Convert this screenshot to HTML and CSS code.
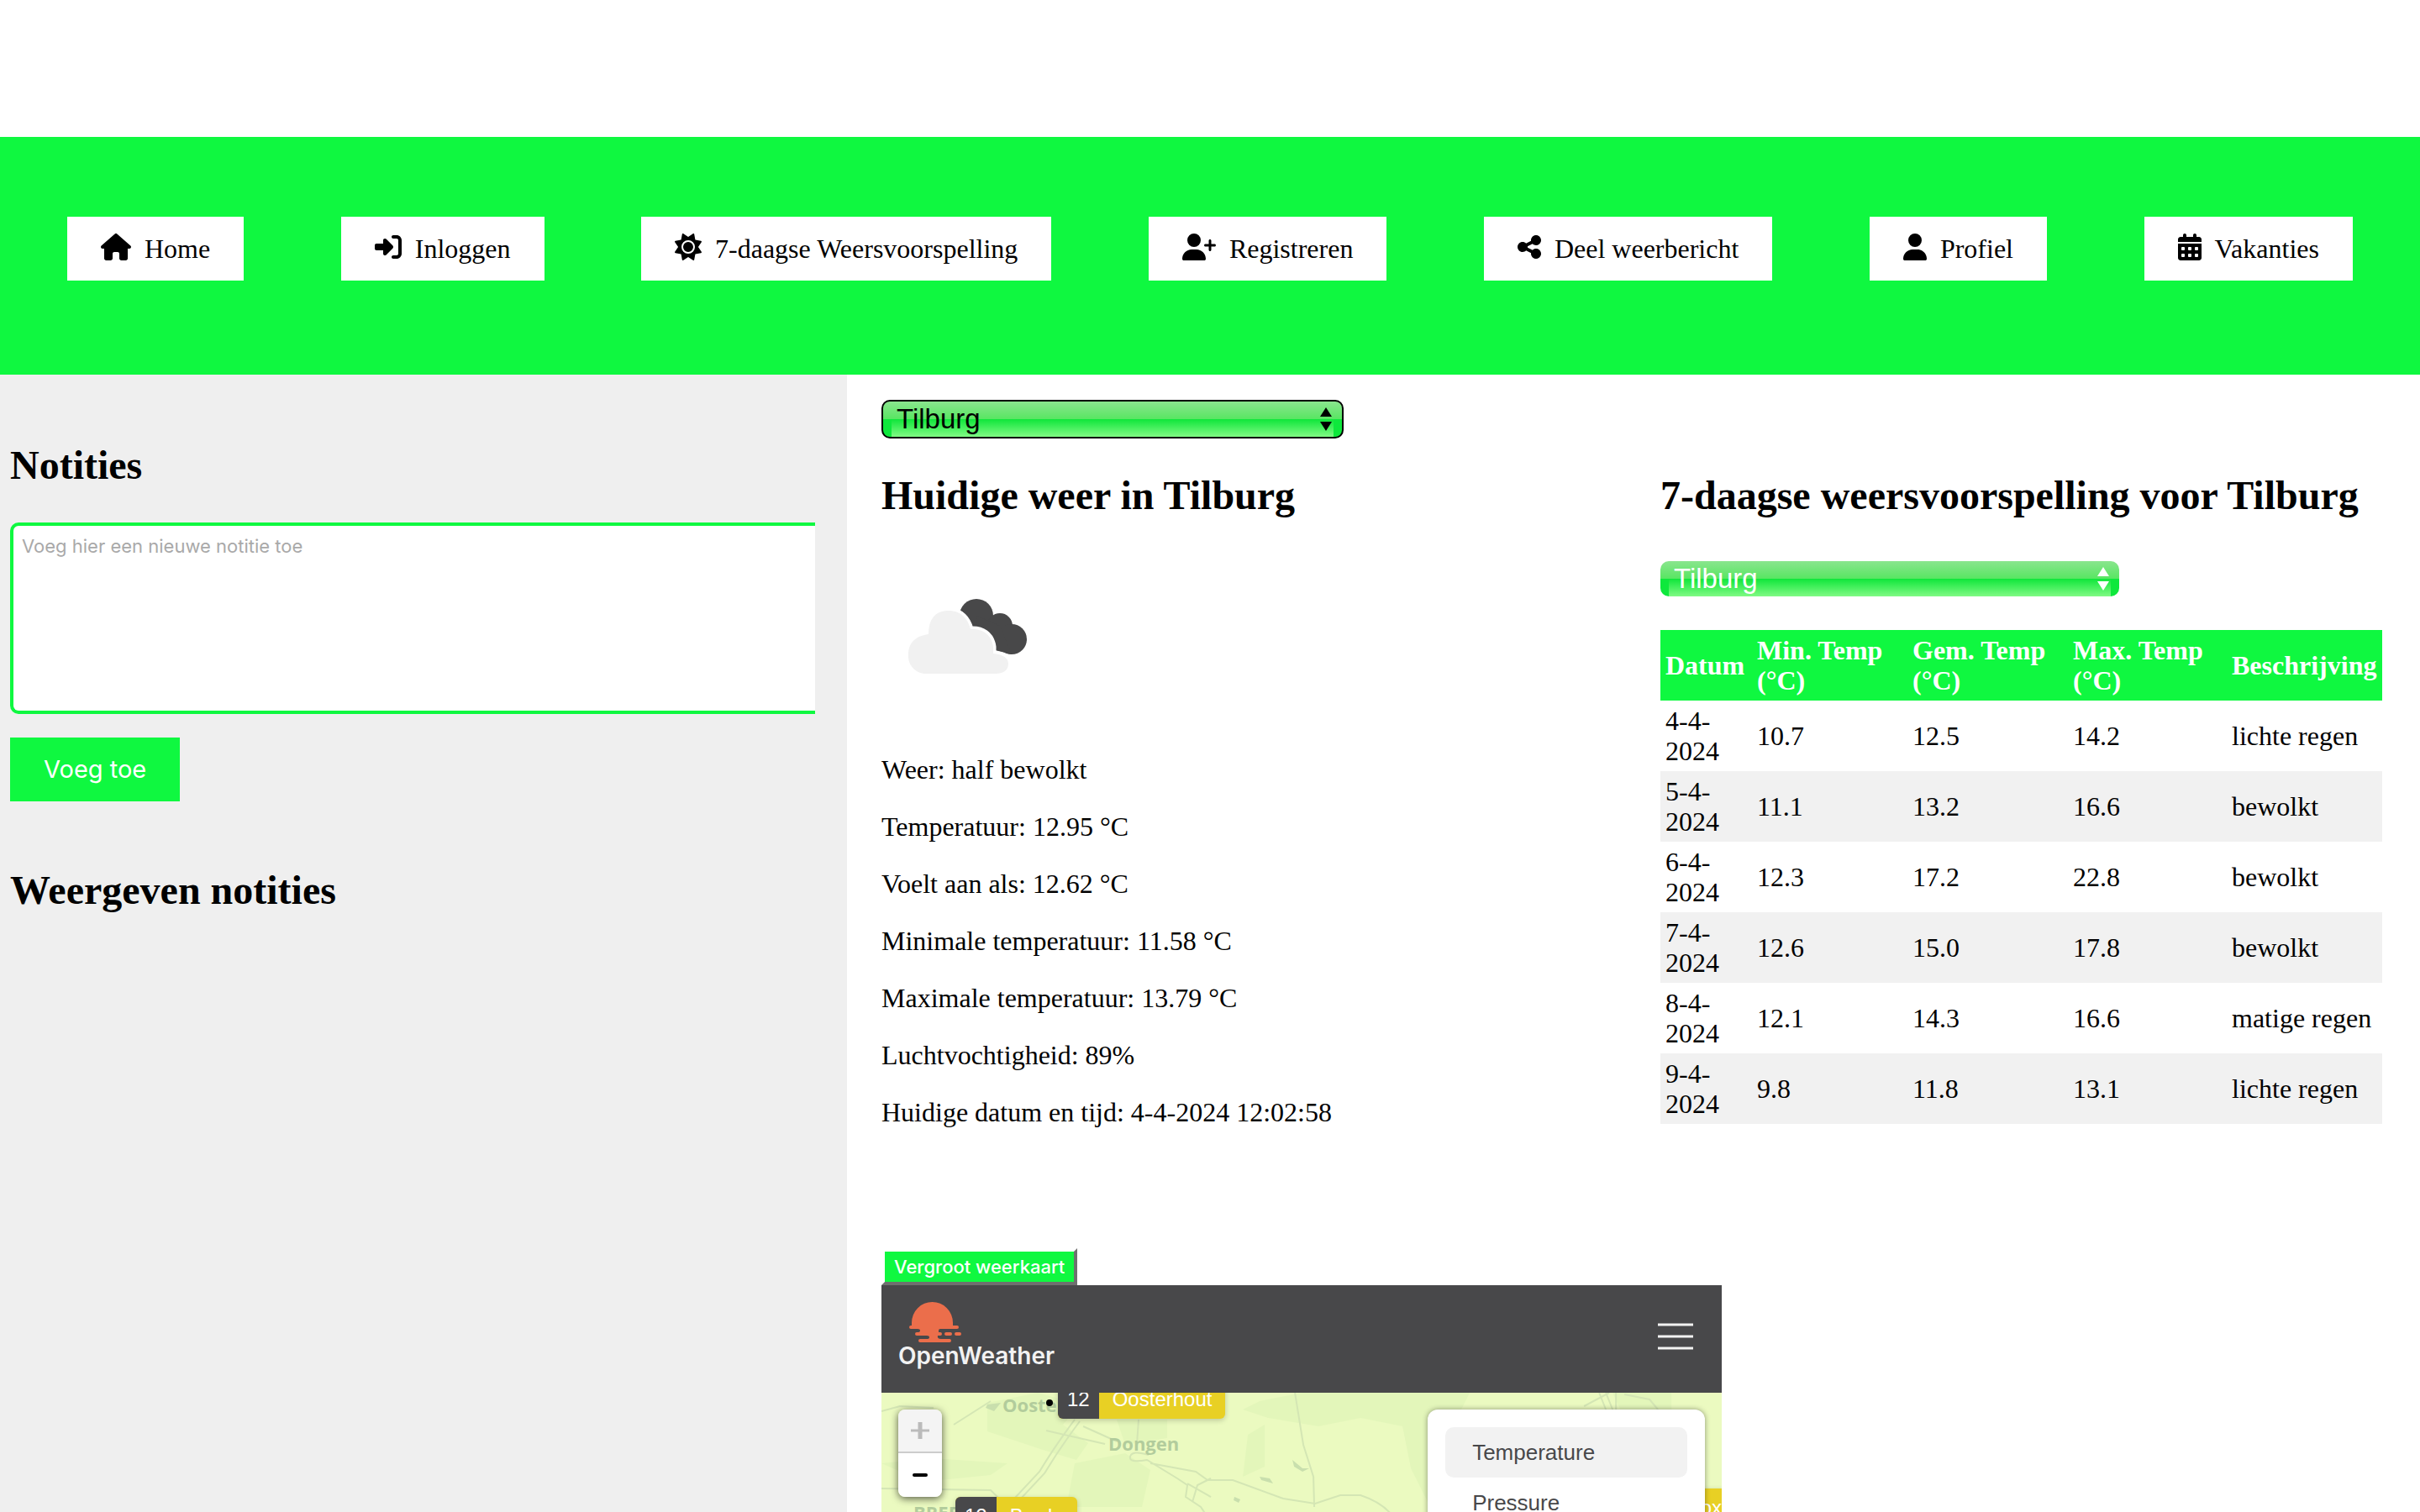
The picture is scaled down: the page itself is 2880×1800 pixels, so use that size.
FILE: index.html
```html
<!DOCTYPE html>
<html lang="nl">
<head>
<meta charset="utf-8">
<title>Weer</title>
<meta name="viewport" content="width=device-width, initial-scale=1">
<link rel="stylesheet" href="styles.css">
</head>
<body>
<header class="header">
  <nav class="nav">
    <a class="nav-link" href="#"><svg class="icon" viewBox="0 0 576 512"><path d="M575.8 255.5c0 18-15 32.1-32 32.1l-32 0 .7 160.2c0 2.7-.2 5.4-.5 8.1l0 16.2c0 22.1-17.9 40-40 40l-16 0c-1.1 0-2.2 0-3.3-.1c-1.4 .1-2.8 .1-4.2 .1L416 512l-24 0c-22.1 0-40-17.9-40-40l0-24 0-64c0-17.7-14.3-32-32-32l-64 0c-17.7 0-32 14.3-32 32l0 64 0 24c0 22.1-17.9 40-40 40l-24 0-31.9 0c-1.5 0-3-.1-4.5-.2c-1.2 .1-2.4 .2-3.6 .2l-16 0c-22.1 0-40-17.9-40-40l0-112c0-.9 0-1.9 .1-2.8l0-69.7-32 0c-18 0-32-14-32-32.1c0-9 3-17 10-24L266.4 8c7-7 15-8 22-8s15 2 21 7L564.8 231.5c8 7 12 15 11 24z"/></svg>Home</a>
    <a class="nav-link" href="#"><svg class="icon" viewBox="0 0 512 512"><path d="M217.9 105.9L340.7 228.7c7.2 7.2 11.3 17.1 11.3 27.3s-4.1 20.1-11.3 27.3L217.9 406.1c-6.4 6.4-15 9.9-24 9.9c-18.7 0-33.9-15.2-33.9-33.9l0-62.1L32 320c-17.7 0-32-14.3-32-32l0-64c0-17.7 14.3-32 32-32l128 0 0-62.1c0-18.7 15.2-33.9 33.9-33.9c9 0 17.6 3.6 24 9.9zM352 416l64 0c17.7 0 32-14.3 32-32l0-256c0-17.7-14.3-32-32-32l-64 0c-17.7 0-32-14.3-32-32s14.3-32 32-32l64 0c53 0 96 43 96 96l0 256c0 53-43 96-96 96l-64 0c-17.7 0-32-14.3-32-32s14.3-32 32-32z"/></svg>Inloggen</a>
    <a class="nav-link" href="#"><svg class="icon" viewBox="0 0 512 512"><path d="M361.5 1.2c5 2.1 8.6 6.6 9.6 11.9L391 121l107.9 19.8c5.3 1 9.8 4.6 11.9 9.6s1.5 10.7-1.6 15.2L446.9 256l62.3 90.3c3.1 4.5 3.7 10.2 1.6 15.2s-6.6 8.6-11.9 9.6L391 391 371.1 498.9c-1 5.3-4.6 9.8-9.6 11.9s-10.7 1.5-15.2-1.6L256 446.9l-90.3 62.3c-4.5 3.1-10.2 3.7-15.2 1.6s-8.6-6.6-9.6-11.9L121 391 13.1 371.1c-5.3-1-9.8-4.6-11.9-9.6s-1.5-10.7 1.6-15.2L65.1 256 2.8 165.7c-3.1-4.5-3.7-10.2-1.6-15.2s6.6-8.6 11.9-9.6L121 121 140.9 13.1c1-5.3 4.6-9.8 9.6-11.9s10.7-1.5 15.2 1.6L256 65.1 346.3 2.8c4.5-3.1 10.2-3.7 15.2-1.6zM160 256a96 96 0 1 1 192 0 96 96 0 1 1 -192 0zm224 0a128 128 0 1 0 -256 0 128 128 0 1 0 256 0z"/></svg>7-daagse Weersvoorspelling</a>
    <a class="nav-link" href="#"><svg class="icon" viewBox="0 0 640 512"><path d="M96 128a128 128 0 1 1 256 0A128 128 0 1 1 96 128zM0 482.3C0 383.8 79.8 304 178.3 304l91.4 0C368.2 304 448 383.8 448 482.3c0 16.4-13.3 29.7-29.7 29.7L29.7 512C13.3 512 0 498.7 0 482.3zM504 312l0-64-64 0c-13.3 0-24-10.7-24-24s10.7-24 24-24l64 0 0-64c0-13.3 10.7-24 24-24s24 10.7 24 24l0 64 64 0c13.3 0 24 10.7 24 24s-10.7 24-24 24l-64 0 0 64c0 13.3-10.7 24-24 24s-24-10.7-24-24z"/></svg>Registreren</a>
    <a class="nav-link" href="#"><svg class="icon" viewBox="0 0 448 512"><path d="M352 224c53 0 96-43 96-96s-43-96-96-96s-96 43-96 96c0 4 .2 8 .7 11.9l-94.1 47C145.4 170.2 121.9 160 96 160c-53 0-96 43-96 96s43 96 96 96c25.9 0 49.4-10.2 66.6-26.9l94.1 47c-.5 3.9-.7 7.8-.7 11.9c0 53 43 96 96 96s96-43 96-96s-43-96-96-96c-25.9 0-49.4 10.2-66.6 26.9l-94.1-47c.5-3.9 .7-7.8 .7-11.9s-.2-8-.7-11.9l94.1-47C302.6 213.8 326.1 224 352 224z"/></svg>Deel weerbericht</a>
    <a class="nav-link" href="#"><svg class="icon" viewBox="0 0 448 512"><path d="M224 256A128 128 0 1 0 224 0a128 128 0 1 0 0 256zm-45.7 48C79.8 304 0 383.8 0 482.3C0 498.7 13.3 512 29.7 512l388.6 0c16.4 0 29.7-13.3 29.7-29.7C448 383.8 368.2 304 269.7 304l-91.4 0z"/></svg>Profiel</a>
    <a class="nav-link" href="#"><svg class="icon" viewBox="0 0 448 512"><path fill-rule="evenodd" d="M128 0c17.700 0 32 14.300 32 32v32h128V32c0-17.700 14.300-32 32-32s32 14.300 32 32v32h48c26.500 0 48 21.500 48 48v48H0v-48c0-26.500 21.500-48 48-48h48V32c0-17.700 14.300-32 32-32zM0 192h448v272c0 26.500-21.500 48-48 48H48c-26.500 0-48-21.500-48-48zM80 256a16 16 0 0 0-16 16v32a16 16 0 0 0 16 16h32a16 16 0 0 0 16-16v-32a16 16 0 0 0-16-16zM208 256a16 16 0 0 0-16 16v32a16 16 0 0 0 16 16h32a16 16 0 0 0 16-16v-32a16 16 0 0 0-16-16zM336 256a16 16 0 0 0-16 16v32a16 16 0 0 0 16 16h32a16 16 0 0 0 16-16v-32a16 16 0 0 0-16-16zM80 384a16 16 0 0 0-16 16v32a16 16 0 0 0 16 16h32a16 16 0 0 0 16-16v-32a16 16 0 0 0-16-16zM208 384a16 16 0 0 0-16 16v32a16 16 0 0 0 16 16h32a16 16 0 0 0 16-16v-32a16 16 0 0 0-16-16zM336 384a16 16 0 0 0-16 16v32a16 16 0 0 0 16 16h32a16 16 0 0 0 16-16v-32a16 16 0 0 0-16-16z"/></svg>Vakanties</a>
  </nav>
</header>

<div class="page">
  <aside class="sidebar">
    <h2>Notities</h2>
    <form class="note-form">
      <textarea class="note-input" aria-label="Notitie" placeholder="Voeg hier een nieuwe notitie toe"></textarea>
      <button class="note-button" type="button">Voeg toe</button>
    </form>
    <h2>Weergeven notities</h2>
  </aside>

  <main class="content">
    <select class="city city-outlined" aria-label="Stad">
      <option>Tilburg</option>
    </select>

    <div class="weather">
      <section class="current">
        <h2>Huidige weer in Tilburg</h2>
        <svg class="weather-icon" viewBox="0 0 200 200" role="img" aria-label="half bewolkt">
          <g fill="#484849"><circle cx="113" cy="75" r="20"/><circle cx="141" cy="87" r="15"/><circle cx="155" cy="103" r="18"/><path d="M113 75l28 12 14 34-40-10z"/></g>
          <path d="M51 144a21 21 0 0 1-19-23c0-14 9-22 24-24 0-18 8-28 24-28 15 0 23 10 26 22 14-1 25 6 27 21v8c11 1 18 5 18 12 0 8-6 12-15 12z" fill="#f1f1f1" stroke="#fff" stroke-width="7" paint-order="stroke"/>
        </svg>
        <p>Weer: half bewolkt</p>
        <p>Temperatuur: 12.95 °C</p>
        <p>Voelt aan als: 12.62 °C</p>
        <p>Minimale temperatuur: 11.58 °C</p>
        <p>Maximale temperatuur: 13.79 °C</p>
        <p>Luchtvochtigheid: 89%</p>
        <p>Huidige datum en tijd: 4-4-2024 12:02:58</p>
      </section>

      <section class="forecast">
        <h2>7-daagse weersvoorspelling voor Tilburg</h2>
        <select class="city city-light" aria-label="Stad voor weersvoorspelling">
          <option>Tilburg</option>
        </select>
        <table class="forecast-table">
          <colgroup><col class="col-date"><col class="col-min"><col class="col-avg"><col class="col-max"><col class="col-text"></colgroup>
          <thead>
            <tr><th>Datum</th><th>Min. Temp (°C)</th><th>Gem. Temp (°C)</th><th>Max. Temp (°C)</th><th>Beschrijving</th></tr>
          </thead>
          <tbody>
            <tr><td>4-4-2024</td><td>10.7</td><td>12.5</td><td>14.2</td><td>lichte regen</td></tr>
            <tr><td>5-4-2024</td><td>11.1</td><td>13.2</td><td>16.6</td><td>bewolkt</td></tr>
            <tr><td>6-4-2024</td><td>12.3</td><td>17.2</td><td>22.8</td><td>bewolkt</td></tr>
            <tr><td>7-4-2024</td><td>12.6</td><td>15.0</td><td>17.8</td><td>bewolkt</td></tr>
            <tr><td>8-4-2024</td><td>12.1</td><td>14.3</td><td>16.6</td><td>matige regen</td></tr>
            <tr><td>9-4-2024</td><td>9.8</td><td>11.8</td><td>13.1</td><td>lichte regen</td></tr>
          </tbody>
        </table>
      </section>
    </div>

    <button class="map-button" type="button">Vergroot weerkaart</button>

    <section class="map">
      <div class="map-header">
        <a class="logo" href="#">
          <svg class="logo-sun" viewBox="0 1 64 50" fill="#eb6e4b"><path d="M4 25.500a24.500 24.500 0 0 1 49 0v3.500h5a2 2 0 0 1 0 4H38a2 2 0 0 0-2 2v2h2a2 2 0 0 1 0 4h-3q-1 4 4 4h10a2 2 0 0 1 0 4H14a2 2 0 0 1 0-4h8q3 0 3-2t-3-2H10a2 2 0 0 1 0-4h1q3 0 3-2t-3-2H3a2 2 0 0 1 0-4h1z"/><rect x="43" y="37" width="9" height="4" rx="2"/><rect x="55" y="37" width="8" height="4" rx="2"/></svg>
          <span class="logo-text">OpenWeather</span>
        </a>
        <button class="menu-button" type="button" aria-label="Menu"><svg viewBox="0 0 42 32" stroke="#f2f2f2" stroke-width="3"><path d="M0 2h42M0 16h42M0 30h42"/></svg></button>
      </div>
      <div class="map-canvas">
        <svg class="map-tiles" viewBox="0 0 1000 142" preserveAspectRatio="xMidYMin slice">
          <g fill="#e3f6ba">
            <path d="M126 12l60-12 50 14-20 24 30 22-14 20-40-12-66-22z"/>
            <path d="M280 32h60v22l-50 8zM230 84l60-12 30 20-10 44h-90zM430 20l20-10 50-10h200l-20 40 20 60-50 30-20-40-10-50-50-10-50 10-60-10z"/>
            <path d="M870 0h70v24l-60-2zM436 50l20-12v50l-26 12zM0 84l60-6 90 6-20 14-80 8z"/>
          </g>
          <g fill="none" stroke="#d4e6b4" stroke-width="2">
            <path d="M0 22l22-6 40 2M86 38l44-28M230 32q-24 32-42 62l-30 32M236 34q-24 32-42 62l-30 32M196 45l70 16M306 32l-2 28M240 40l40 18M0 114l130 2 14 14"/>
            <path d="M318 74q-20-6-22 2t20 4l36 22 12 8-2 14 18 12 12 18M364 108l28 16M320 84l54 10 14 10h30l60 22 38 6 30-10h24q24 8 36 22M370 130l6-20 16-8"/>
            <path d="M492 0l10 62 12 38 1 36M836 16l30-16M854 0l8 20M862 0l8 20M874 0v20M884 2l30 6 10 12"/>
          </g>
          <g fill="#c9dfad"><path d="M126 14l16-2-8 10-10-4zM489 80l12 10h8l-8 4-10-6zM450 100l12 2 4 6-14-4zM420 124l7 3-2 4-6-3z"/></g>
        </svg>
        <span class="place place-oosterhout">Ooster</span>
        <span class="place place-dongen">Dongen</span>
        <span class="place place-breda">BREDA</span>
        <span class="dot"></span>
        <div class="marker marker-oosterhout"><span class="marker-temp">12</span><span class="marker-name">Oosterhout</span></div>
        <div class="marker marker-breda"><span class="marker-temp">12</span><span class="marker-name">Breda</span></div>
        <div class="marker marker-boxtel"><span class="marker-temp">12</span><span class="marker-name">Boxtel</span></div>
        <div class="zoom">
          <button class="zoom-button zoom-in" type="button" aria-label="Inzoomen" disabled><svg viewBox="0 0 22 22" stroke="#bbb" stroke-width="4"><path d="M0 11h22" stroke-width="3"/><path d="M11 1v20" stroke-width="5"/></svg></button>
          <button class="zoom-button" type="button" aria-label="Uitzoomen"><svg viewBox="0 0 22 22" stroke="#000" stroke-width="4" stroke-linecap="round"><path d="M4 11h14"/></svg></button>
        </div>
        <div class="layers">
          <button class="layer layer-active" type="button">Temperature</button>
          <button class="layer" type="button">Pressure</button>
        </div>
      </div>
    </section>
  </main>
</div>
</body>
</html>
```
FILE: styles.css
```css
* {
  box-sizing: border-box;
}

:root {
  --green: #0ff840;
  --dark: #48484a;
  --ui: Inter, "Liberation Sans", sans-serif;
  --arial: "Liberation Sans", Arial, sans-serif;
}

body {
  display: flex;
  flex-direction: column;
  height: 100vh;
  margin: 0;
  padding-top: 163px;
  overflow: hidden;
  background: #fff;
  color: #000;
  font-family: "Liberation Serif", "Times New Roman", serif;
  font-size: 32px;
  line-height: 36px;
}

h2 {
  margin: 40px 0;
  font-size: 48px;
  line-height: 56px;
}

p {
  margin: 32px 0;
}

button {
  border: 0;
  padding: 0;
  font-family: var(--ui);
}

/* Navigation */
.header {
  padding: 95px 80px 112px;
  background: var(--green);
}

.nav {
  display: flex;
  justify-content: space-between;
}

.nav-link {
  display: flex;
  gap: 16px;
  padding: 20px 40px;
  background: #fff;
  color: #000;
  text-decoration: none;
  white-space: nowrap;
}

.icon {
  height: 32px;
}

.page {
  display: flex;
  flex: 1;
  min-height: 0;
}

/* Notes */
.sidebar {
  flex: 0 0 35%;
  padding: 40px 38px 0 12px;
  background: #efefef;
}

.note-form {
  display: flex;
  flex-direction: column;
  align-items: flex-start;
  gap: 28px;
  margin-bottom: 78px;
}

.note-input {
  display: block;
  width: 100%;
  height: 228px;
  padding: 10px;
  border: 4px solid var(--green);
  border-right: 0;
  border-radius: 10px 0 0 10px;
  background: #fff;
  font-family: var(--ui);
  font-size: 22px;
  line-height: 28px;
  resize: none;
}

.note-input::placeholder {
  color: #a9a9a9;
}

.note-button {
  padding: 20px 40px;
  background: var(--green);
  color: #fff;
  font-size: 29px;
  line-height: 36px;
}

/* Weather */
.content {
  display: flex;
  flex: 1;
  flex-direction: column;
  align-items: flex-start;
  min-width: 0;
  padding: 30px 45px 0 41px;
}

.city {
  display: block;
  height: 42px;
  padding: 0 16px;
  border: 0;
  border-radius: 10px;
  appearance: none;
  background:
    var(--arrows) right 12px center / 14px 28px no-repeat,
    linear-gradient(#8ae58e, #58e662) top / 100% 50% no-repeat,
    linear-gradient(#0fe63a, #80fa84) bottom center / calc(100% - 20px) 50% no-repeat,
    #0ee83c;
  font-family: var(--arial);
  font-size: 33px;
  line-height: 36px;
}

.city-outlined {
  --arrows: url("data:image/svg+xml,%3Csvg xmlns='http://www.w3.org/2000/svg' viewBox='0 0 14 28'%3E%3Cpath d='M7 0l7 11H0zM7 28l7-11H0z'/%3E%3C/svg%3E");
  width: 550px;
  height: 46px;
  border: 2px solid #000;
  color: #000;
}

.city-light {
  --arrows: url("data:image/svg+xml,%3Csvg xmlns='http://www.w3.org/2000/svg' viewBox='0 0 14 28'%3E%3Cpath fill='white' d='M7 0l7 11H0zM7 28l7-11H0z'/%3E%3C/svg%3E");
  width: 546px;
  margin-top: 50px;
  color: #fff;
}

.weather {
  display: grid;
  grid-template-columns: 927fr 859fr;
  align-self: stretch;
}

.weather-icon {
  display: block;
  width: 200px;
  margin-bottom: 40px;
}

.forecast-table {
  width: 100%;
  margin-top: 40px;
  border-collapse: collapse;
  table-layout: fixed;
}

.forecast-table th,
.forecast-table td {
  padding: 6px;
  text-align: left;
}

.forecast-table th {
  background: var(--green);
  color: #fff;
}

.forecast-table tbody tr:nth-child(even) {
  background: #f1f1f1;
}

.col-date {
  width: 109px;
}

.col-min {
  width: 185px;
}

.col-avg {
  width: 191px;
}

.col-max {
  width: 189px;
}

/* Map */
.map-button {
  margin-top: 112px;
  padding: 4px 11px;
  border: 4px solid;
  border-color: #fff #6f6f6f #6f6f6f #fff;
  background: var(--green) padding-box;
  color: #fff;
  font-size: 22px;
  font-weight: 500;
  line-height: 28px;
}

.map {
  display: flex;
  flex: 1;
  flex-direction: column;
  width: 56%;
  min-height: 0;
}

.map-header {
  display: flex;
  align-items: flex-start;
  justify-content: space-between;
  height: 128px;
  padding: 20px 34px 0 20px;
  background: var(--dark);
}

.logo {
  display: flex;
  flex-direction: column;
  color: #f2f2f2;
  text-decoration: none;
}

.logo-sun {
  width: 64px;
  height: 50px;
  margin-left: 12px;
}

.logo-text {
  font-family: var(--ui);
  font-size: 28px;
  font-weight: 600;
  line-height: 28px;
}

.menu-button {
  height: 32px;
  margin-top: 25px;
  background: none;
}

.menu-button svg {
  display: block;
  width: 42px;
  height: 32px;
}

.map-canvas {
  position: relative;
  flex: 1;
  overflow: hidden;
  background: #ebfac0;
  font-family: var(--arial);
  font-size: 24px;
  line-height: 28px;
}

.map-tiles {
  position: absolute;
  inset: 0;
  width: 100%;
  height: 100%;
}

.place {
  position: absolute;
  color: #b2cc9c;
  font-family: "Open Sans", sans-serif;
  font-size: 22px;
  font-weight: 700;
}

.place-oosterhout {
  top: 0;
  left: 144px;
}

.place-dongen {
  top: 46px;
  left: 270px;
}

.place-breda {
  top: 128px;
  left: 38px;
}

.dot {
  position: absolute;
  top: 8px;
  left: 196px;
  width: 8px;
  height: 8px;
  border-radius: 50%;
  background: #000;
}

.marker {
  position: absolute;
  display: flex;
  overflow: hidden;
  border-radius: 6px;
  background: #e8d024;
  box-shadow: 0 2px 6px rgba(0, 0, 0, 0.2);
  color: #fff;
}

.marker-temp {
  padding: 9px 11px;
  background: var(--dark);
}

.marker-name {
  padding: 9px 16px;
}

.marker-oosterhout {
  top: -15px;
  left: 210px;
}

.marker-breda {
  top: 124px;
  left: 88px;
}

.marker-boxtel {
  top: 114px;
  left: 894px;
}

.zoom {
  position: absolute;
  top: 20px;
  left: 20px;
  display: flex;
  flex-direction: column;
  width: 52px;
  overflow: hidden;
  border-radius: 8px;
  box-shadow: 0 2px 10px rgba(0, 0, 0, 0.65);
}

.zoom-button {
  display: flex;
  align-items: center;
  justify-content: center;
  height: 52px;
  background: #fff;
}

.zoom-button svg {
  width: 22px;
  height: 22px;
}

.zoom-in {
  border-bottom: 2px solid #ccc;
  background: #f4f4f4;
}

.layers {
  position: absolute;
  top: 20px;
  right: 20px;
  display: flex;
  flex-direction: column;
  width: 330px;
  padding: 21px;
  border-radius: 12px;
  background: #fff;
  box-shadow: 0 0 6px rgba(0, 0, 0, 0.4);
}

.layer {
  height: 60px;
  padding: 0 32px;
  border-radius: 10px;
  background: #fff;
  color: var(--dark);
  font-family: var(--arial);
  font-size: 26px;
  text-align: left;
}

.layer-active {
  background: #f2f2f2;
}
```
